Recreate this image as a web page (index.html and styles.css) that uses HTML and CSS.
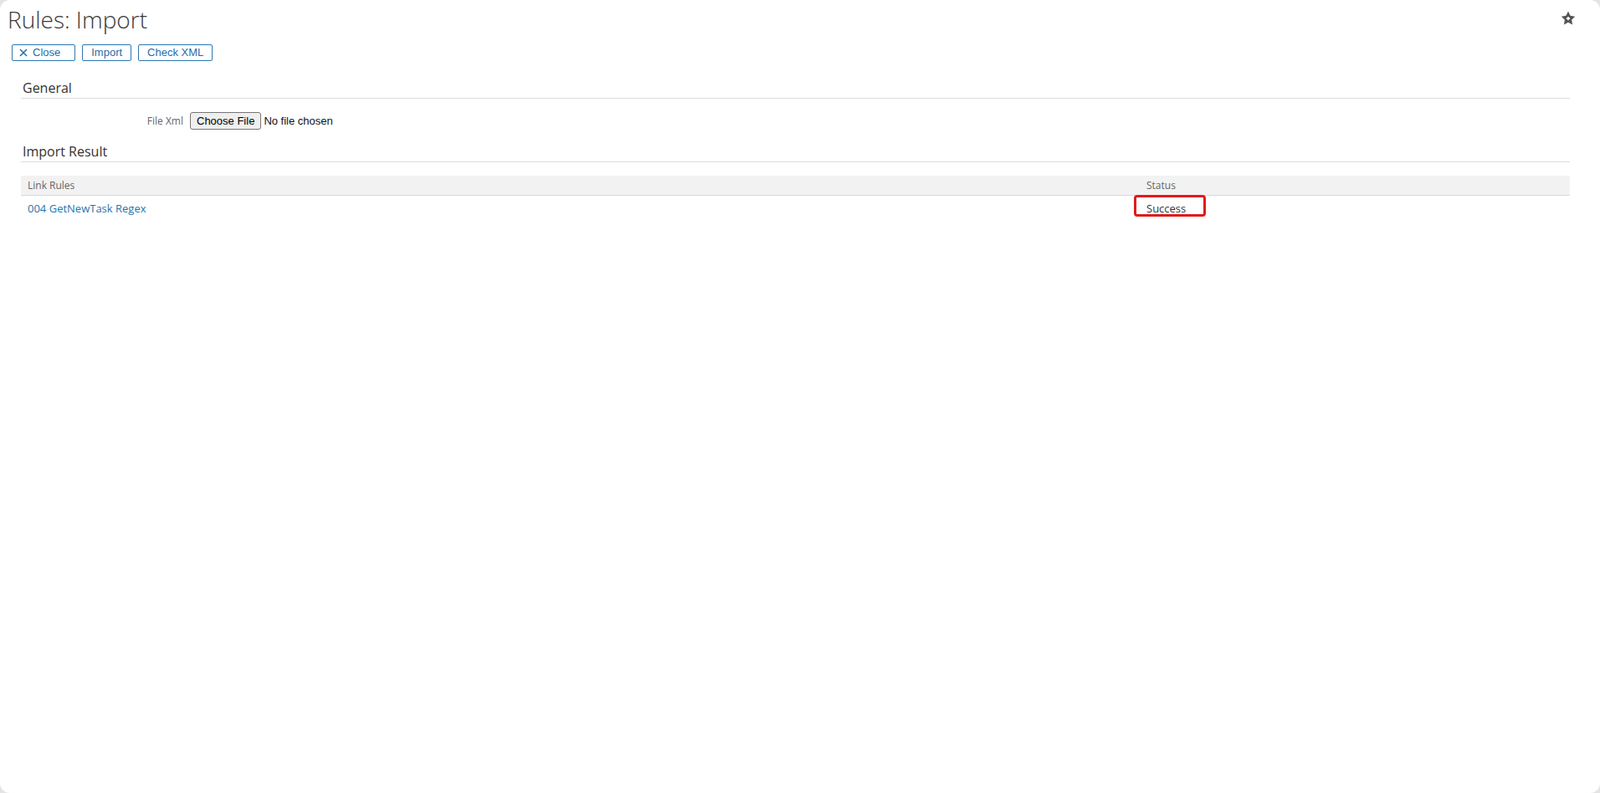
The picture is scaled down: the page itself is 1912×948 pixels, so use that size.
FILE: index.html
```html
<!DOCTYPE html>
<html lang="en">
<head>
<meta charset="utf-8">
<title>Rules: Import</title>
<link rel="stylesheet" href="styles.css">
</head>
<body>
<div class="panel">
  <div class="page-head">
    <h1 class="title">Rules: Import</h1>
    <button class="star" type="button" aria-label="Add to favorites">
      <svg width="18" height="18" viewBox="0 0 24 24">
        <path d="M12 0.8l3.4 7 7.6 1.1-5.5 5.4 1.3 7.6L12 18.3l-6.8 3.6 1.3-7.6L1 8.9l7.6-1.1z" fill="#555"/>
        <path d="M12 9.4v5.6M9.2 12.2h5.6" stroke="#fff" stroke-width="2.1"/>
      </svg>
    </button>
  </div>
  <div class="toolbar">
    <button class="btn btn-close" type="button">
      <svg class="x-icon" width="10" height="10" viewBox="0 0 10 10"><path d="M1 1l8 8M9 1L1 9" stroke="currentColor" stroke-width="1.5"/></svg>
      <span>Close</span>
    </button>
    <button class="btn" type="button">Import</button>
    <button class="btn" type="button">Check XML</button>
  </div>

  <section class="section">
    <h2 class="section-title">General</h2>
    <div class="form-row">
      <label class="form-label" for="filexml">File Xml</label>
      <input class="file-input" id="filexml" type="file">
    </div>
  </section>

  <section class="section">
    <h2 class="section-title">Import Result</h2>
    <table class="result-table">
      <thead>
        <tr><th class="col-rule">Link Rules</th><th class="col-status">Status</th></tr>
      </thead>
      <tbody>
        <tr>
          <td><a class="rule-link" href="#">004 GetNewTask Regex</a></td>
          <td class="status-cell"><span class="highlight"></span>Success</td>
        </tr>
      </tbody>
    </table>
  </section>
</div>
</body>
</html>
```

FILE: styles.css
```css
html, body {
  margin: 0;
  padding: 0;
  background: #e4e4e4;
}

.panel {
  box-sizing: border-box;
  height: 948px;
  background: #fff;
  border-radius: 12px;
  font-family: "Open Sans", "Liberation Sans", sans-serif;
  color: #333;
  overflow: hidden;
}

.page-head {
  display: flex;
  justify-content: space-between;
  align-items: flex-start;
  padding: 0 29px 0 9px;
}

.title {
  margin: 0;
  padding-top: 4px;
  font-size: 28px;
  line-height: 38px;
  font-weight: 300;
  color: #3a3a3a;
}

.star {
  margin-top: 13px;
  padding: 0;
  border: 0;
  background: none;
  width: 18px;
  height: 18px;
  display: block;
}
.star svg { display: block; }

.toolbar {
  display: flex;
  gap: 8px;
  margin-top: 11px;
  padding-left: 14px;
}

.btn {
  display: inline-flex;
  align-items: center;
  gap: 6px;
  height: 20px;
  box-sizing: border-box;
  padding: 0 10px;
  border: 1px solid #2b78b2;
  border-radius: 2px;
  background: #fff;
  color: #1f6ea8;
  font-family: "Liberation Sans", Arial, sans-serif;
  font-size: 13px;
  line-height: 18px;
}

.btn-close {
  padding: 0 17px 0 8px;
}

.x-icon { display: block; }

.section {
  margin: 0 36px 0 25px;
}

.section-title {
  margin: 22px 0 0;
  padding: 0 0 1px 2px;
  font-size: 16px;
  line-height: 21px;
  font-weight: 400;
  color: #333;
  border-bottom: 1px solid #dcdcdc;
}

.form-row {
  display: flex;
  align-items: center;
  margin-top: 16px;
  height: 21px;
}

.form-label {
  width: 194px;
  margin-right: 8px;
  text-align: right;
  font-size: 12px;
  color: #666;
}

.file-input {
  font-family: "Liberation Sans", Arial, sans-serif;
  font-size: 13px;
  color: #111;
}
.file-input::file-selector-button {
  font-family: "Liberation Sans", Arial, sans-serif;
  font-size: 13px;
  line-height: 17px;
  padding: 1px 7px;
  margin-right: 3px;
  border: 1px solid #767676;
  border-radius: 3px;
  background: #efefef;
  color: #000;
}

.section + .section .section-title {
  margin-top: 16px;
}

.result-table {
  width: 100%;
  margin-top: 16px;
  border-collapse: collapse;
}

.result-table th {
  text-align: left;
  font-weight: 400;
  font-size: 12px;
  line-height: 17px;
  color: #666;
  background: #f2f2f2;
  padding: 3px 8px;
  border-bottom: 1px solid #dadada;
}

.col-rule { width: 1321px; }

.result-table td {
  padding: 6px 8px;
  font-size: 13px;
  line-height: 18px;
  color: #333;
}

.rule-link {
  color: #2675ae;
  text-decoration: none;
}

.status-cell {
  position: relative;
}

.highlight {
  position: absolute;
  left: -7px;
  top: -1px;
  width: 86px;
  height: 26px;
  box-sizing: border-box;
  border: 3px solid #e01b1b;
  border-radius: 4px;
}
```
